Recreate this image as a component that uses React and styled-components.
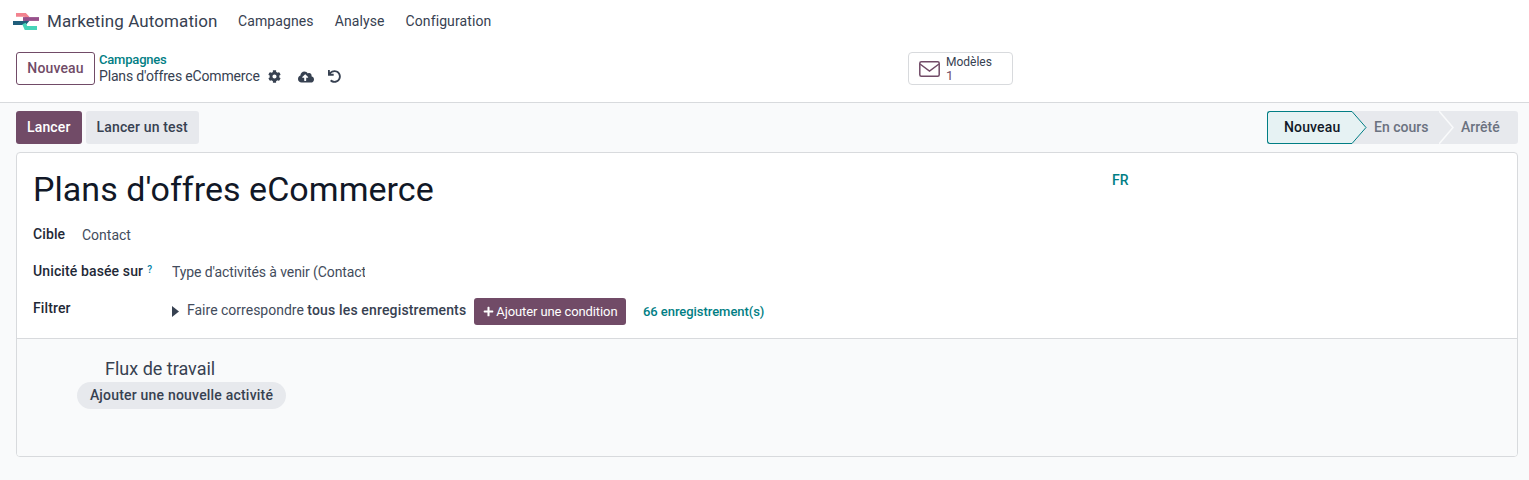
import React from 'react';
import styled, { createGlobalStyle } from 'styled-components';
import { FaCog, FaCloudUploadAlt, FaUndo, FaPlus } from 'react-icons/fa';

const Global = createGlobalStyle`
  html, body { margin: 0; padding: 0; background: #f9fafb; }
  body { font-family: Roboto, "Noto Sans", sans-serif; font-size: 14px; color: #374151; height: 480px; overflow: hidden; }
  * { box-sizing: border-box; }
`;

const Nav = styled.nav`
  height: 42px; background: #fff; display: flex; align-items: center; padding-left: 13px;
`;
const Brand = styled.div`
  display: flex; align-items: center; gap: 8px; font-size: 17px; color: #374151; letter-spacing: 0.1px; margin-right: 10px;
`;
const NavItem = styled.div`
  font-size: 14px; color: #374151; padding: 0 10.5px; letter-spacing: .1px;
`;
const Control = styled.div`
  height: 61px; background: #fff; border-bottom: 1px solid #d8dadd; padding: 10px 16px 0; display: grid; grid-template-columns: 892px 1fr; align-items: start;
`;
const Left = styled.div`
  display: flex; align-items: flex-start; gap: 4px;
`;
const OutlineBtn = styled.button`
  height: 33px; width: 79px; border: 1px solid #714b67; border-radius: 3px; background: #fff; color: #714b67;
  font: 500 14px Roboto, sans-serif; letter-spacing: .15px; padding: 0 0 1px;
`;
const Crumbs = styled.div`
  display: flex; flex-direction: column;
`;
const CrumbLink = styled.div`
  font-size: 13px; font-weight: 500; color: #017e84; line-height: 15px; letter-spacing: -.2px;
`;
const CrumbRow = styled.div`
  display: flex; align-items: center; font-size: 14px; line-height: 17px; color: #374151; margin-top: 1px;
`;
const CrumbTitle = styled.span`
  letter-spacing: -.16px;
`;
const IconSlot = styled.span`
  display: inline-flex; align-items: center; color: #374151; margin-left: ${p => p.$ml}px;
`;
const StatButton = styled.div`
  width: 105px; height: 33px; border: 1px solid #d8dadd; border-radius: 4px; background: #fff; display: flex; align-items: center; padding-left: 10px; gap: 6px;
`;
const StatText = styled.div`
  display: flex; flex-direction: column; font-size: 12px; line-height: 14px; color: #374151;
`;
const StatValue = styled.span`
  color: #714b67; font-size: 13px;
`;
const Actions = styled.div`
  display: flex; justify-content: space-between; align-items: flex-start; padding: 8px 11px 0 16px; height: 49px;
`;
const BtnGroup = styled.div`
  display: flex; gap: 4px;
`;
const Btn = styled.button`
  height: 33px; border: 0; border-radius: 3px; padding: 0 11px 1px; font: 500 14px Roboto, sans-serif; letter-spacing: .15px;
  background: ${p => (p.$primary ? '#714b67' : '#e7e9ed')}; color: ${p => (p.$primary ? '#fff' : '#374151')};
`;
const Status = styled.div`
  display: flex; height: 33px; background: #e7e9ed; border-radius: 3px; position: relative;
`;
const Stage = styled.div`
  position: relative; height: 33px; width: ${p => p.$w}px; display: flex; align-items: center; font-weight: 500; font-size: 14px;
  padding-left: ${p => p.$pl}px; padding-bottom: 1px; color: ${p => (p.$active ? '#111827' : '#6b7280')};
  letter-spacing: ${p => (p.$active ? '.15px' : '0')};
  background: ${p => (p.$active ? '#e6f2f3' : 'transparent')};
  ${p => p.$active ? 'border: 1px solid #017e84; border-right: 0; border-radius: 3px 0 0 3px;' : ''}
`;
const Chevron = styled.svg`
  position: absolute; top: 0; left: ${p => p.$left}px; z-index: 1; display: block;
`;
const Sheet = styled.div`
  margin: 0 11px 0 16px; height: 305px; border: 1px solid #d8dadd; border-radius: 4px; background: #fff; display: flex; flex-direction: column; overflow: hidden;
`;
const Main = styled.div`
  height: 186px; border-bottom: 1px solid #d8dadd; padding: 16px 16px 0; flex: none;
`;
const TitleRow = styled.div`
  display: grid; grid-template-columns: 1079px 1fr; height: 55px;
`;
const Title = styled.div`
  font-size: 34px; line-height: 41px; margin-top: 0; letter-spacing: .05px; color: #111827; white-space: nowrap;
`;
const Lang = styled.div`
  font-size: 14px; font-weight: 500; color: #017e84; line-height: 20px; margin-top: 1px;
`;
const Row = styled.div`
  display: flex; align-items: flex-start; height: ${p => p.$h}px;
`;
const Label = styled.div`
  width: ${p => p.$w}px; font-weight: 500; color: #1f2937; line-height: 20px; letter-spacing: .12px; flex: none; white-space: nowrap;
`;
const Sup = styled.sup`
  color: #0180a5; font-size: 10px; font-weight: 500; margin-left: 4px; position: relative; top: -3px; line-height: 0; vertical-align: baseline;
`;
const Value = styled.div`
  line-height: 20px; color: #434c5c; margin-top: 1px;
`;
const Clipped = styled(Value)`
  width: 193px; overflow: hidden; white-space: nowrap; letter-spacing: -.1px;
`;
const Filter = styled.div`
  display: flex; align-items: center; margin-top: 0; height: 27px;
`;
const FilterText = styled.span`
  margin-left: 8px; margin-bottom: 3px; color: #434c5c;
`;
const Strong = styled.strong`
  font-weight: 500; letter-spacing: .15px; color: #374151;
`;
const CondBtn = styled.button`
  height: 27px; margin-left: 8px; background: #714b67; color: #fff; border: 0; border-radius: 3px; padding: 0 9px; font: 400 13px Roboto, sans-serif; letter-spacing: -.1px; display: flex; align-items: center; gap: 2px;
`;
const Count = styled.div`
  margin-left: 16.5px; color: #017e84; font-size: 13px; font-weight: 500; letter-spacing: -.05px;
`;
const Bottom = styled.div`
  flex: 1; background: #f9fafb; padding: 18px 0 0 60px;
`;
const Flow = styled.div`
  font-size: 18px; line-height: 24px; color: #374151; margin-left: 28px;
`;
const Pill = styled.button`
  display: block; margin-top: 1px; height: 27px; width: 209px; border: 0; border-radius: 14px; background: #e7e9ed; color: #374151; font: 500 14px Roboto, sans-serif; letter-spacing: .2px; padding: 0 0 1px;
`;

const Logo = () => (
  <svg width="26" height="18" viewBox="0 0 26 18" fill="none" strokeWidth="3.800">
    <path d="M3 2.800H12L15 6" stroke="#f2838f" />
    <path d="M15 7.500L12 11H0" stroke="#1f5d7a" />
    <path d="M11 11.500L13 16H24" stroke="#46d3b8" />
    <path d="M10 7H26" stroke="#97508b" />
  </svg>
);

const Mail = () => (
  <svg width="21" height="16" viewBox="0 0 21 16" fill="none" stroke="#714b67" strokeWidth="1.500">
    <rect x="0.800" y="0.800" width="19.400" height="14.400" rx="1.500" />
    <path d="M1 3L10.500 10L20 3" />
  </svg>
);

const Caret = () => (
  <svg width="7" height="11" viewBox="0 0 7 11" fill="#374151">
    <path d="M0 0L7 5.500L0 11Z" />
  </svg>
);

export default function App() {
  return (
    <>
      <Global />
      <Nav>
        <Brand><Logo /><span>Marketing Automation</span></Brand>
        <NavItem>Campagnes</NavItem>
        <NavItem>Analyse</NavItem>
        <NavItem>Configuration</NavItem>
      </Nav>
      <Control>
        <Left>
          <OutlineBtn>Nouveau</OutlineBtn>
          <Crumbs>
            <CrumbLink>Campagnes</CrumbLink>
            <CrumbRow>
              <CrumbTitle>Plans d'offres eCommerce</CrumbTitle>
              <IconSlot $ml={8}><FaCog size={13} /></IconSlot>
              <IconSlot $ml={17}><FaCloudUploadAlt size={16} /></IconSlot>
              <IconSlot $ml={14}><FaUndo size={13} /></IconSlot>
            </CrumbRow>
          </Crumbs>
        </Left>
        <StatButton>
          <Mail />
          <StatText>Modèles<StatValue>1</StatValue></StatText>
        </StatButton>
      </Control>
      <Actions>
        <BtnGroup>
          <Btn $primary>Lancer</Btn>
          <Btn>Lancer un test</Btn>
        </BtnGroup>
        <Status>
          <Stage $active $w={85} $pl={16}>Nouveau</Stage>
          <Stage $w={87} $pl={22}>En cours</Stage>
          <Stage $w={79} $pl={22}>Arrêté</Stage>
          <Chevron $left={85} width="15" height="33" viewBox="0 0 15 33">
            <path d="M0 0.500L14 16.500L0 32.500Z" fill="#e6f2f3" />
            <path d="M0 0.500L14 16.500L0 32.500" fill="none" stroke="#017e84" />
          </Chevron>
          <Chevron $left={172} width="15" height="33" viewBox="0 0 15 33">
            <path d="M0 0L14 16.500L0 33" fill="none" stroke="#f9fafb" strokeWidth="1.500" />
          </Chevron>
        </Status>
      </Actions>
      <Sheet>
        <Main>
          <TitleRow>
            <Title>Plans d'offres eCommerce</Title>
            <Lang>FR</Lang>
          </TitleRow>
          <Row $h={37}>
            <Label $w={49}>Cible</Label>
            <Value>Contact</Value>
          </Row>
          <Row $h={37}>
            <Label $w={139}>Unicité basée sur<Sup>?</Sup></Label>
            <Clipped>Type d'activités à venir (Contact</Clipped>
          </Row>
          <Row $h={30}>
            <Label $w={139}>Filtrer</Label>
            <Filter>
              <Caret />
              <FilterText>Faire correspondre <Strong>tous les enregistrements</Strong></FilterText>
              <CondBtn><FaPlus size={11} />Ajouter une condition</CondBtn>
              <Count>66 enregistrement(s)</Count>
            </Filter>
          </Row>
        </Main>
        <Bottom>
          <Flow>Flux de travail</Flow>
          <Pill>Ajouter une nouvelle activité</Pill>
        </Bottom>
      </Sheet>
    </>
  );
}
